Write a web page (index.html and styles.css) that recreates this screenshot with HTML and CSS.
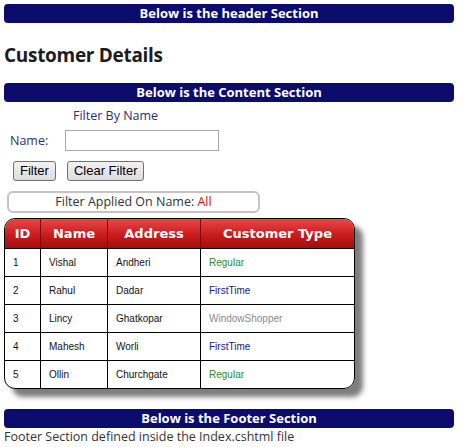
FILE: index.html
```html
<!DOCTYPE html>
<html>
<head>
<meta charset="utf-8">
<link rel="stylesheet" href="styles.css">
</head>
<body>
<div class="bar bar-header">Below is the header Section</div>
<h1 class="title">Customer Details</h1>
<div class="bar bar-content">Below is the Content Section</div>
<div class="filter">
  <div class="filter-title">Filter By Name</div>
  <div class="filter-row">
    <label class="filter-label">Name:</label>
    <input class="filter-input" type="text">
  </div>
  <div class="filter-buttons">
    <button class="btn">Filter</button>
    <button class="btn">Clear Filter</button>
  </div>
  <div class="applied">Filter Applied On Name: <span class="applied-value">All</span></div>
</div>
<div class="table-wrap">
  <table class="grid">
    <thead>
      <tr><th class="c-id">ID</th><th class="c-name">Name</th><th class="c-addr">Address</th><th class="c-type">Customer Type</th></tr>
    </thead>
    <tbody>
      <tr><td>1</td><td>Vishal</td><td>Andheri</td><td class="t-regular">Regular</td></tr>
      <tr><td>2</td><td>Rahul</td><td>Dadar</td><td class="t-first">FirstTime</td></tr>
      <tr><td>3</td><td>Lincy</td><td>Ghatkopar</td><td class="t-window">WindowShopper</td></tr>
      <tr><td>4</td><td>Mahesh</td><td>Worli</td><td class="t-first">FirstTime</td></tr>
      <tr><td>5</td><td>Ollin</td><td>Churchgate</td><td class="t-regular">Regular</td></tr>
    </tbody>
  </table>
</div>
<div class="bar bar-footer">Below is the Footer Section</div>
<div class="footer-text">Footer Section defined inside the Index.cshtml file</div>
</body>
</html>
```
FILE: styles.css
```css
html, body {
  margin: 0;
  padding: 0;
  background: #ffffff;
}
body {
  padding: 4px 12px 0 4px;
  font-family: "Open Sans", "Noto Sans", sans-serif;
  color: #222;
}
.bar {
  background: #0c0c6c;
  color: #ffffff;
  font-weight: bold;
  font-size: 13px;
  text-align: center;
  height: 19px;
  line-height: 19px;
  border-radius: 4px;
}
.title {
  margin: 0;
  padding: 19px 0 0 0;
  height: 41px;
  box-sizing: border-box;
  font-size: 19px;
  line-height: 26px;
  font-weight: bold;
  color: #1c1c1c;
  letter-spacing: -0.3px;
}
.bar-content {
  margin-top: 19px;
}
.filter {
  display: flex;
  flex-direction: column;
}
.filter-title {
  margin: 4px 0 0 69px;
  font-size: 12.5px;
  line-height: 20px;
  color: #2e2e6e;
}
.filter-row {
  display: flex;
  align-items: center;
  margin-top: 4px;
  height: 21px;
}
.filter-label {
  width: 61px;
  padding-left: 6px;
  box-sizing: border-box;
  font-size: 12.5px;
  color: #2e2e6e;
}
.filter-input {
  width: 154px;
  height: 21px;
  box-sizing: border-box;
  border: 1px solid #a9a9a9;
  margin: 0;
  padding: 0;
}
.filter-buttons {
  display: flex;
  gap: 11px;
  margin: 10px 0 0 9px;
}
.btn {
  font-family: "Liberation Sans", Arial, sans-serif;
  font-size: 13px;
  height: 20px;
  padding: 0 6px;
  margin: 0;
  border: 1px solid #707070;
  border-radius: 3px;
  background: linear-gradient(#f2f2f2, #dcdcdc);
  color: #000;
  line-height: 18px;
}
.applied {
  margin: 10px 0 0 3px;
  width: 253px;
  height: 22px;
  box-sizing: border-box;
  border: 2px solid #c4c4c4;
  border-radius: 6px;
  text-align: center;
  font-size: 12.5px;
  line-height: 18px;
  color: #333;
}
.applied-value {
  color: #d01010;
}
.table-wrap {
  margin-top: 5px;
  width: 351px;
  border-radius: 11px;
  box-shadow: 8px 8px 5px #7e7e7e;
}
.grid {
  width: 351px;
  border-collapse: separate;
  border-spacing: 0;
  border: 1px solid #000;
  border-radius: 11px;
  overflow: hidden;
  font-family: "Liberation Sans", Arial, sans-serif;
  table-layout: fixed;
}
.grid th {
  height: 29px;
  background: linear-gradient(#e84848 0%, #c81c1c 55%, #a50d0d 100%);
  color: #ffffff;
  font-family: "DejaVu Sans", Verdana, sans-serif;
  font-weight: bold;
  font-size: 13px;
  text-align: center;
  border-left: 1px solid #7a0a0a;
  padding: 0;
}
.grid th:first-child {
  border-left: none;
}
.c-id { width: 35px; }
.c-name { width: 66px; }
.c-addr { width: 92px; }
.grid td {
  height: 27px;
  padding: 0 0 0 8px;
  font-size: 10px;
  color: #111;
  border-top: 1px solid #000;
  border-left: 1px solid #000;
}
.grid td:first-child {
  border-left: none;
}
.t-regular { color: #2a8a2a !important; }
.t-first { color: #1a1a78 !important; }
.t-window { color: #8a8a8a !important; }
.bar-footer {
  margin-top: 20px;
}
.footer-text {
  font-size: 12.5px;
  line-height: 18px;
  color: #333;
}
```
